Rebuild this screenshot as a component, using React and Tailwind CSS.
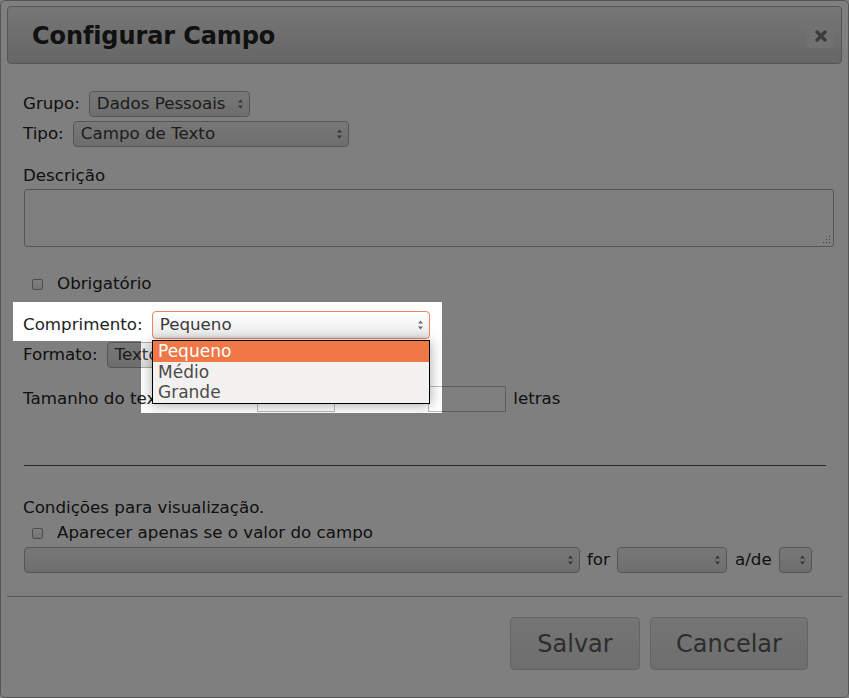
import React from "react";
import clsx from "clsx";

function Arrows() {
  return (
    <svg width="7" height="12" viewBox="0 0 7 12" className="shrink-0">
      <path d="M1 4.5 L3.5 1.5 L6 4.5 Z" fill="#6a6a6a" />
      <path d="M1 7.5 L3.5 10.5 L6 7.5 Z" fill="#6a6a6a" />
    </svg>
  );
}

function Select({ value, className, focus }) {
  return (
    <div
      className={clsx(
        "flex items-center justify-between rounded-[4px] border bg-linear-to-b pl-[7px] pr-[5px] text-[#3a3a3a]",
        focus
          ? "border-[#f0835a] from-white to-[#ebebeb] shadow-[inset_0_-1px_2px_rgba(0,0,0,0.05)]"
          : "border-[#ababab] from-[#f0f0f0] to-[#dcdcdc]",
        className
      )}
    >
      <span className="whitespace-nowrap">{value}</span>
      <Arrows />
    </div>
  );
}

function Checkbox() {
  return (
    <div className="w-[11px] h-[11px] rounded-[2px] border border-[#9a9a9a] bg-linear-to-b from-white to-[#e8e8e8] shrink-0" />
  );
}

function ResizeHandle() {
  return (
    <svg width="9" height="9" viewBox="0 0 9 9" className="absolute right-[2px] bottom-[2px]">
      <rect x="7" y="1" width="1" height="1" fill="#777" />
      <rect x="7" y="4" width="1" height="1" fill="#777" />
      <rect x="4" y="4" width="1" height="1" fill="#777" />
      <rect x="7" y="7" width="1" height="1" fill="#777" />
      <rect x="4" y="7" width="1" height="1" fill="#777" />
      <rect x="1" y="7" width="1" height="1" fill="#777" />
    </svg>
  );
}

export default function App() {
  return (
    <div className="relative w-[849px] h-[698px] overflow-hidden bg-white font-['DejaVu_Sans',sans-serif] text-[16.7px] text-[#222]">
      <div className="w-[849px] h-[698px] border border-[#aaaaaa] rounded-[5px] bg-white flex flex-col">
        {/* header */}
        <div className="mx-[6px] mt-[5px] h-[58px] border border-[#aaaaaa] rounded-[4px] bg-linear-to-b from-[#ededed] to-[#cdcdcd] flex items-center justify-between pl-[24px] pr-[7px]">
          <h1 className="text-[24px] font-bold text-[#222] tracking-[-0.1px] mt-[2px]">Configurar Campo</h1>
          <div className="w-[27px] h-[25px] mt-[1px] rounded-[4px] bg-[#e2e2e2] flex items-center justify-center">
            <svg width="12" height="12" viewBox="0 0 12 12">
              <path d="M2 2 L10 10 M10 2 L2 10" stroke="#777" strokeWidth="3.2" strokeLinecap="round" />
            </svg>
          </div>
        </div>

        {/* body */}
        <div className="pl-[22px] pr-[14px] flex flex-col">
          <div className="mt-[27px] h-[26px] flex items-center gap-[9px]">
            <span>Grupo:</span>
            <Select value="Dados Pessoais" className="w-[161px] h-[26px]" />
          </div>
          <div className="mt-[4px] h-[26px] flex items-center gap-[9px]">
            <span>Tipo:</span>
            <Select value="Campo de Texto" className="w-[276px] h-[26px]" />
          </div>

          <div className="mt-[19px] h-[20px] flex items-center">Descrição</div>
          <div className="relative mt-[3px] ml-[1px] w-[810px] h-[58px] border border-[#ababab] rounded-[3px] bg-white">
            <ResizeHandle />
          </div>

          <div className="mt-[27px] h-[20px] flex items-center">
            <div className="ml-[9px] w-[25px]">
              <Checkbox />
            </div>
            <span>Obrigatório</span>
          </div>

          <div className="mt-[17px] h-[28px] flex items-center gap-[9px]">
            <span>Comprimento:</span>
            <Select value="Pequeno" focus className="w-[278px] h-[28px]" />
          </div>
          <div className="mt-[3px] h-[26px] flex items-center gap-[9px]">
            <span>Formato:</span>
            <Select value="Texto livre" className="w-[200px] h-[26px]" />
          </div>

          <div className="mt-[18px] h-[26px] flex items-center">
            <span>Tamanho do texto: Mínimo</span>
            <div className="ml-[12px] w-[78px] h-[26px] border border-[#bbbbbb] bg-white" />
            <span className="ml-[19px]">Máximo</span>
            <div className="ml-[9px] w-[78px] h-[26px] border border-[#bbbbbb] bg-white" />
            <span className="ml-[7px]">letras</span>
          </div>

          <div className="mt-[53px] ml-[1px] w-[802px] h-[1px] bg-[#555]" />

          <div className="mt-[32px] h-[20px] flex items-center">Condições para visualização.</div>
          <div className="mt-[5px] h-[20px] flex items-center">
            <div className="ml-[9px] w-[25px]">
              <Checkbox />
            </div>
            <span>Aparecer apenas se o valor do campo</span>
          </div>
          <div className="mt-[4px] h-[26px] flex items-center">
            <Select value="" className="ml-[1px] w-[556px] h-[26px]" />
            <span className="ml-[7px]">for</span>
            <Select value="" className="ml-[7px] w-[110px] h-[26px]" />
            <span className="ml-[8px]">a/de</span>
            <Select value="" className="ml-[7px] w-[33px] h-[26px] pl-[2px]" />
          </div>
        </div>

        <div className="mt-[23px] mx-[6px] h-[1px] bg-[#aaaaaa]" />

        {/* footer */}
        <div className="mt-[20px] pr-[40px] flex justify-end gap-[10px]">
          <button className="w-[130px] h-[53px] rounded-[4px] border border-[#c8c8c8] bg-linear-to-b from-[#eaeaea] to-[#dcdcdc] text-[24px] text-[#5a5a5a]">
            Salvar
          </button>
          <button className="w-[158px] h-[53px] rounded-[4px] border border-[#c8c8c8] bg-linear-to-b from-[#eaeaea] to-[#dcdcdc] text-[24px] text-[#5a5a5a]">
            Cancelar
          </button>
        </div>
      </div>

      {/* open list of the Comprimento select */}
      <div className="absolute left-[152px] top-[340px] w-[278px] z-10 border border-black bg-[#f2f1ef] shadow-[0_1px_12px_rgba(0,0,0,0.35)] text-[17px] leading-[20.5px]">
        <div className="bg-[#f07746] text-white pl-[5px]">Pequeno</div>
        <div className="text-[#4a4a4a] pl-[5px]">Médio</div>
        <div className="text-[#4a4a4a] pl-[5px]">Grande</div>
      </div>

      {/* dim layer with a hole around the highlighted row */}
      <div className="absolute left-0 top-0 w-full h-[302px] bg-black/50 z-20" />
      <div className="absolute left-0 top-[302px] w-[13px] h-[39px] bg-black/50 z-20" />
      <div className="absolute left-[442px] right-0 top-[302px] h-[39px] bg-black/50 z-20" />
      <div className="absolute left-0 top-[341px] w-[141px] h-[72px] bg-black/50 z-20" />
      <div className="absolute left-[442px] right-0 top-[341px] h-[72px] bg-black/50 z-20" />
      <div className="absolute left-0 top-[413px] w-full bottom-0 bg-black/50 z-20" />
    </div>
  );
}
